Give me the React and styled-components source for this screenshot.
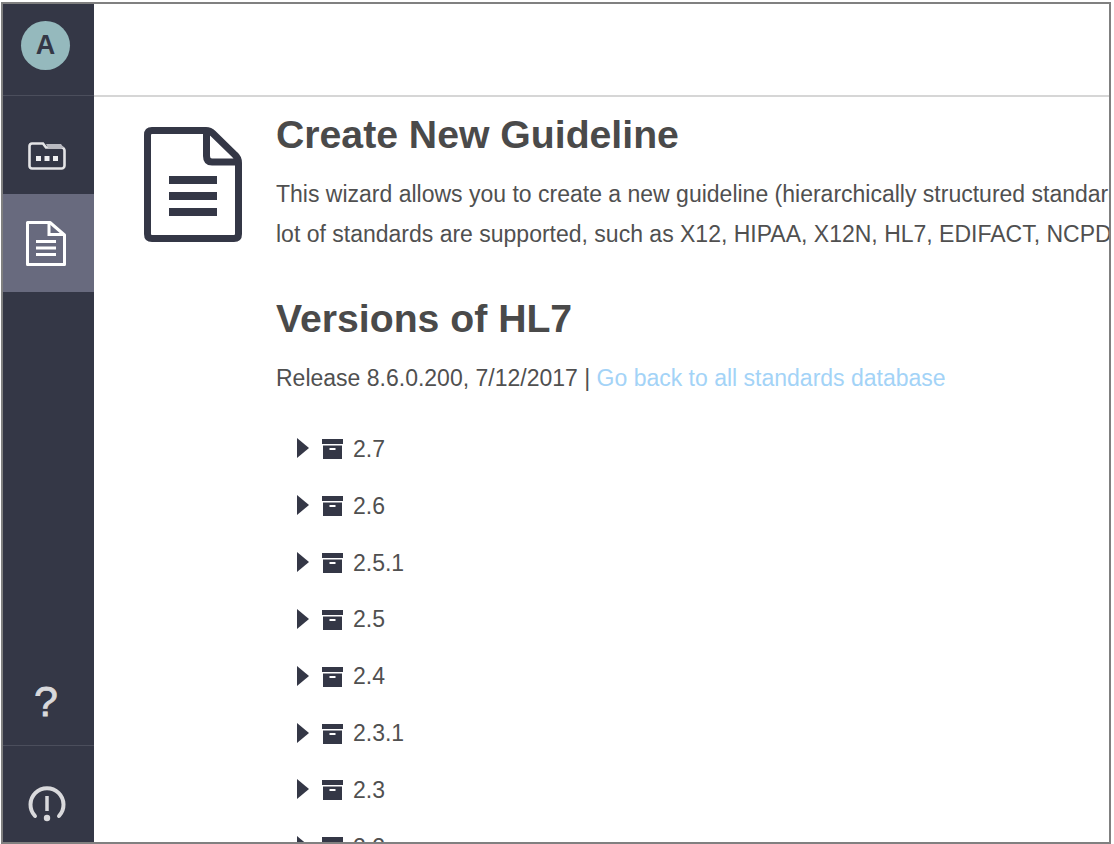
import React from "react";
import styled, { createGlobalStyle } from "styled-components";

const Global = createGlobalStyle`
  html, body { margin: 0; padding: 0; background: #fff; overflow: hidden; }
  #root { width: 1114px; height: 844px; }
`;
const Page = styled.div`
  width: 1114px; height: 844px; box-sizing: border-box; padding: 2px 3px 0 1px; background: #fff;
  font-family: "Liberation Sans", Arial, sans-serif;
`;
const Frame = styled.div`
  height: 842px; box-sizing: border-box; border: 2px solid #808080; display: flex; overflow: hidden; background: #fff;
`;
const Sidebar = styled.nav`
  width: 91px; flex: none; background: #343746; display: flex; flex-direction: column;
`;
const AvatarCell = styled.div`
  height: 92px; flex: none; box-sizing: border-box; padding: 17px 0 0 18px; border-bottom: 1px solid #4b4e5c;
`;
const Avatar = styled.div`
  width: 49px; height: 49px; border-radius: 50%; background: #95b9bd; color: #343746; font-weight: 700; font-size: 27px; display: flex; align-items: center; justify-content: center;
`;
const NavItem = styled.div`
  height: ${p => p.$h}px; flex: none; display: flex; align-items: center; justify-content: center; box-sizing: border-box;
  padding: ${p => p.$pad || "0"};
  background: ${p => (p.$active ? "#686a7e" : "transparent")};
  border-top: ${p => (p.$line ? "1px solid #4b4e5c" : "none")};
`;
const Spacer = styled.div` flex: 1; `;
const Help = styled.span` color: #d9d9dc; font-size: 43px; font-weight: 400; -webkit-text-stroke: 0.8px #d9d9dc; line-height: 1; `;
const Main = styled.main` flex: 1; min-width: 0; display: flex; flex-direction: column; `;
const Header = styled.header` height: 91px; flex: none; border-bottom: 2px solid #d6d6d6; `;
const Body = styled.div` display: flex; flex: 1; min-height: 0; overflow: hidden; `;
const IconCol = styled.div` width: 182px; flex: none; padding: 30px 0 0 50px; box-sizing: border-box; `;
const Content = styled.div` flex: 1; min-width: 0; color: #444; white-space: nowrap; overflow: hidden; `;
const Title = styled.h1` margin: 18px 0 0; font-size: 39.2px; line-height: 40px; font-weight: 700; color: #4a4a4a; `;
const Para = styled.p` margin: 19px 0 0; font-size: 23px; line-height: 40px; color: #505050; `;
const SubTitle = styled.h2` margin: 43px 0 0; font-size: 39.2px; line-height: 44px; font-weight: 700; color: #4a4a4a; `;
const Release = styled.p` margin: 17px 0 0; font-size: 23px; line-height: 40px; color: #505050; `;
const Link = styled.a` color: #a3d3f7; `;
const Tree = styled.ul` list-style: none; margin: 23px 0 0; padding: 0 0 0 21px; `;
const Row = styled.li` height: 56.85px; display: flex; align-items: center; gap: 10px; font-size: 23px; color: #505050; `;
const ArrowWrap = styled.span` display: flex; margin: -2px 3px 0 0; `;

const Arrow = () => (
  <ArrowWrap><svg width="12" height="20" viewBox="0 0 12 20"><path d="M0 0 L12 10 L0 20Z" fill="#343746" /></svg></ArrowWrap>
);
const Box = () => (
  <svg width="21" height="20" viewBox="0 0 21 20">
    <path d="M0 0H21V5H0Z M1 6.5H20V20H1Z" fill="#343746" />
    <rect x="7.5" y="9" width="6" height="2" fill="#fff" />
  </svg>
);
const FolderIcon = () => (
  <svg width="38" height="28" viewBox="0 0 38 28" fill="none">
    <path d="M1.5 24V4A2.5 2.5 0 0 1 4 1.5h11l3 4h15.500A3 3 0 0 1 36.500 8.500V23.500a3 3 0 0 1-3 3H4A2.500 2.500 0 0 1 1.500 24Z" stroke="#e4e4e6" strokeWidth="2.6" />
    <path d="M18 2h15l3 4H20Z" fill="#b9bac1" />
    <rect x="8" y="14" width="5" height="5" fill="#f0f0f2" /><rect x="16.500" y="14" width="5" height="5" fill="#f0f0f2" /><rect x="25" y="14" width="5" height="5" fill="#f0f0f2" />
  </svg>
);
const DocSmall = () => (
  <svg width="40" height="45" viewBox="0 0 40 45" fill="none">
    <path d="M1.500 1.500H24L38.500 14V43.500H1.500Z" stroke="#fff" strokeWidth="3" strokeLinejoin="round" />
    <path d="M23 2V13.500H38" stroke="#fff" strokeWidth="3" />
    <path d="M10 20.500H30M10 27H30M10 33.500H30" stroke="#fff" strokeWidth="3" />
  </svg>
);
const DocLarge = () => (
  <svg width="98" height="115" viewBox="0 0 98 115" fill="none">
    <path d="M8 3.500H62Q66 3.500 69 6.500L91 28Q94.500 31 94.500 36V107Q94.500 111.500 90 111.500H8Q3.500 111.500 3.500 107V8Q3.500 3.500 8 3.500Z" stroke="#343746" strokeWidth="7" />
    <path d="M62.500 4V29Q62.500 35 68 35H94" stroke="#343746" strokeWidth="7" />
    <path d="M25 53H73M25 69H73M25 85H73" stroke="#343746" strokeWidth="8" />
  </svg>
);
const Power = () => (
  <svg width="38" height="39" viewBox="0 0 38 39" fill="none">
    <path d="M7 31A16.500 16.500 0 1 1 31 31" stroke="#d9d9dc" strokeWidth="4" strokeLinecap="round" />
    <path d="M19 11V26" stroke="#d9d9dc" strokeWidth="3.500" />
    <circle cx="19" cy="33" r="3.200" fill="#d9d9dc" />
  </svg>
);

const versions = ["2.7", "2.6", "2.5.1", "2.5", "2.4", "2.3.1", "2.3", "2.2"];

export default function App() {
  return (
    <Page>
      <Global />
      <Frame>
        <Sidebar>
          <AvatarCell><Avatar>A</Avatar></AvatarCell>
          <NavItem $h={98} $pad="21px 4px 0 0"><FolderIcon /></NavItem>
          <NavItem $h={98} $active $pad="0 5px 0 0"><DocSmall /></NavItem>
          <Spacer />
          <NavItem $h={81} $pad="0 5px 6px 0"><Help>?</Help></NavItem>
          <NavItem $h={97} $line $pad="20px 4px 0 0"><Power /></NavItem>
        </Sidebar>
        <Main>
          <Header />
          <Body>
            <IconCol><DocLarge /></IconCol>
            <Content>
              <Title>Create New Guideline</Title>
              <Para>
                This wizard allows you to create a new guideline (hierarchically structured standard).<br />
                lot of standards are supported, such as X12, HIPAA, X12N, HL7, EDIFACT, NCPDP
              </Para>
              <SubTitle>Versions of HL7</SubTitle>
              <Release>Release 8.6.0.200, 7/12/2017 | <Link>Go back to all standards database</Link></Release>
              <Tree>
                {versions.map(v => (
                  <Row key={v}><Arrow /><Box /><span>{v}</span></Row>
                ))}
              </Tree>
            </Content>
          </Body>
        </Main>
      </Frame>
    </Page>
  );
}
